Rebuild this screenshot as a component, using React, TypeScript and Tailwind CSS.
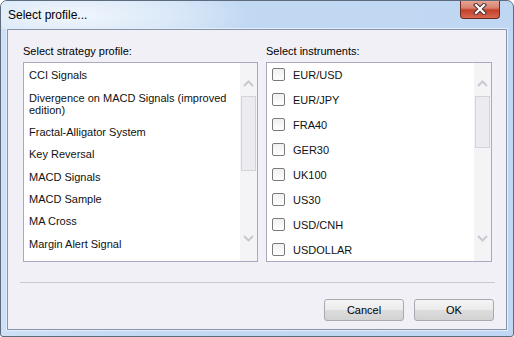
import React from "react";

const strategies: string[] = [
  "CCI Signals",
  "Divergence on MACD Signals (improved edition)",
  "Fractal-Alligator System",
  "Key Reversal",
  "MACD Signals",
  "MACD Sample",
  "MA Cross",
  "Margin Alert Signal",
];

const instruments: string[] = [
  "EUR/USD",
  "EUR/JPY",
  "FRA40",
  "GER30",
  "UK100",
  "US30",
  "USD/CNH",
  "USDOLLAR",
];

function Chevron({ up }: { up: boolean }) {
  return (
    <svg width="11" height="7" viewBox="0 0 11 7">
      <path
        d={up ? "M1 6 L5.5 1.5 L10 6" : "M1 1 L5.5 5.5 L10 1"}
        fill="none"
        stroke="#c9c9d2"
        strokeWidth="2"
      />
    </svg>
  );
}

function ScrollBar({ thumb }: { thumb: number }) {
  return (
    <div className="w-[17px] h-full bg-[#f4f4f6] flex flex-col shrink-0">
      <div className="h-[33px] flex justify-center pt-[17px]">
        <Chevron up />
      </div>
      <div
        className="mx-[1px] border border-[#d3d3dc] bg-[#ebebf0]"
        style={{ height: thumb }}
      />
      <div className="flex-1" />
      <div className="flex justify-center pb-[19px]">
        <Chevron up={false} />
      </div>
    </div>
  );
}

export default function App() {
  return (
    <div
      className="w-[514px] h-[337px] border border-[#5d6b7d] rounded-t-[7px] rounded-b-[3px] flex flex-col overflow-hidden bg-[linear-gradient(90deg,#cde0f5_0%,#c2d9f3_30%,#bfd7f2_100%)]"
      style={{ fontFamily: '"Liberation Sans", Arial, sans-serif' }}
    >
      <div className="h-[28px] flex justify-between items-start bg-[radial-gradient(ellipse_180px_40px_at_70px_14px,#f1f6fc_0%,#d9e8f8_60%,rgba(200,220,243,0)_100%)]">
        <div className="pl-[7px] pt-[7px] text-[12px] leading-[14px] text-black">
          Select profile...
        </div>
        <div className="mr-[13px] -mt-[1px] w-[40px] h-[19px] rounded-b-[4px] border border-[#6e2b22] border-t-0 bg-[linear-gradient(180deg,#e8a797_0%,#d9826f_45%,#c2412b_55%,#d9674e_100%)] flex items-center justify-center">
          <svg width="14" height="12" viewBox="0 0 14 12">
            <path d="M3 2 L11 10 M11 2 L3 10" stroke="#4a3030" strokeWidth="4.2" strokeLinecap="square" />
            <path d="M3 2 L11 10 M11 2 L3 10" stroke="#ffffff" strokeWidth="2.2" strokeLinecap="square" />
          </svg>
        </div>
      </div>

      <div className="mx-[6px] h-[301px] border border-[#8594a8] bg-[#f1f0f6] flex flex-col shadow-[0_0_0_1px_#e4eefa]">
        <div className="flex pl-[15px] pt-[13px]">
          <div className="w-[235px] flex flex-col">
            <div className="h-[19px] text-[11px] leading-[16px] text-black">
              Select strategy profile:
            </div>
            <div className="h-[200px] border border-[#aaa9bf] bg-white flex">
              <div className="flex-1 pt-[1px] text-[11px] text-[#111]">
                {strategies.map((s) => (
                  <div key={s} className="pl-[5px] pr-[2px] py-[5.2px] leading-[12px]">
                    {s}
                  </div>
                ))}
              </div>
              <ScrollBar thumb={75} />
            </div>
          </div>

          <div className="w-[226px] ml-[8px] flex flex-col">
            <div className="h-[19px] text-[11px] leading-[16px] text-black">
              Select instruments:
            </div>
            <div className="h-[200px] border border-[#aaa9bf] bg-white flex">
              <div className="flex-1 -mt-[1px] text-[11px] text-[#111]">
                {instruments.map((s) => (
                  <div key={s} className="h-[25px] flex items-center pl-[5px]">
                    <div className="w-[13px] h-[13px] border border-[#7a7a7a] rounded-[2px] bg-[linear-gradient(180deg,#f0f0f0,#ffffff)] shrink-0" />
                    <span className="ml-[8px] leading-[12px]">{s}</span>
                  </div>
                ))}
              </div>
              <ScrollBar thumb={52} />
            </div>
          </div>
        </div>

        <div className="ml-[12px] mt-[20px] w-[475px] h-[1px] bg-[#c9c8d6]" />

        <div className="flex justify-end gap-[10px] mt-[16px] pr-[12px]">
          <button className="w-[80px] h-[22px] border border-[#a9a9b0] rounded-[3px] bg-[linear-gradient(180deg,#f4f4f4_0%,#ebebeb_50%,#dddddd_51%,#d2d2d2_100%)] text-[11px] leading-[14px] text-black">
            Cancel
          </button>
          <button className="w-[80px] h-[22px] border border-[#a9a9b0] rounded-[3px] bg-[linear-gradient(180deg,#f4f4f4_0%,#ebebeb_50%,#dddddd_51%,#d2d2d2_100%)] text-[11px] leading-[14px] text-black">
            OK
          </button>
        </div>
      </div>
    </div>
  );
}
